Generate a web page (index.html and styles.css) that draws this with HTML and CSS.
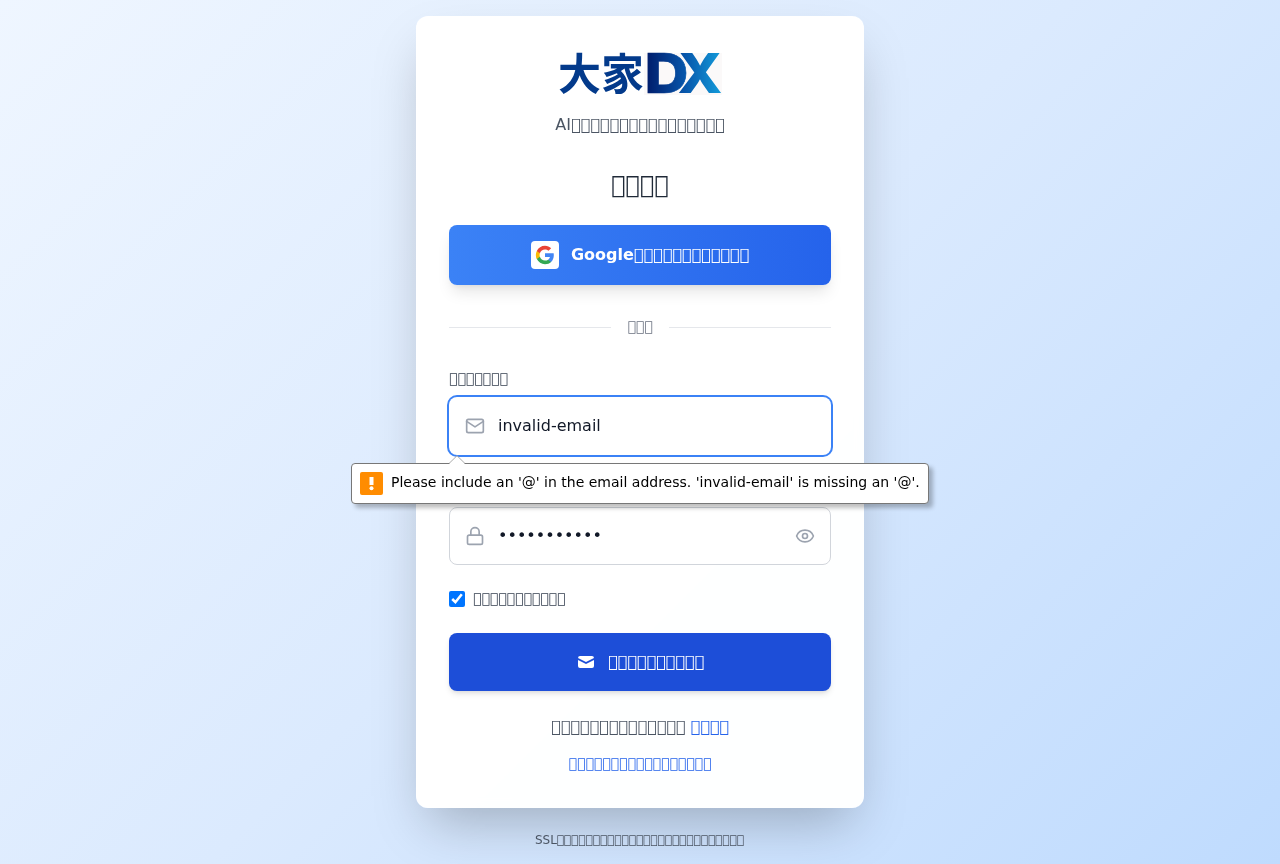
FILE: index.html
```html
<!DOCTYPE html>
<html lang="ja">
<head>
<meta charset="utf-8">
<title>Login</title>
<link rel="stylesheet" href="styles.css">
</head>
<body>
<main class="page">
  <section class="card">
    <svg class="logo" width="168" height="48" viewBox="0 0 168 48">
      <defs>
        <linearGradient id="dx" gradientUnits="userSpaceOnUse" x1="91" y1="10" x2="166" y2="10">
          <stop offset="0" stop-color="#001d6c"/><stop offset=".5" stop-color="#0755aa"/><stop offset="1" stop-color="#149ddb"/>
        </linearGradient>
      </defs>
      <rect x="88" y="4" width="78" height="42" fill="#fbf9f9"/>
      <text class="logo-kanji" x="2" y="41" textLength="86">大家</text>
      <text class="logo-latin" x="88.500" y="44" textLength="44" lengthAdjust="spacingAndGlyphs">D</text>
      <text class="logo-latin logo-x" x="121.500" y="44" textLength="45" lengthAdjust="spacingAndGlyphs">X</text>
    </svg>
    <p class="tagline">AI&#xE900;&#xE900;&#xE900;&#xE900;&#xE900;&#xE900;&#xE900;&#xE900;&#xE900;&#xE900;&#xE900;&#xE900;&#xE900;&#xE900;&#xE900;&#xE900;</p>
    <h1 class="title">&#xE900;&#xE900;&#xE900;&#xE900;</h1>
    <button class="google" type="button">
      <span class="google-mark">
        <svg width="20" height="20" viewBox="0 0 24 24">
          <path fill="#4285F4" d="M22.56 12.25c0-.78-.07-1.53-.2-2.25H12v4.26h5.92c-.26 1.37-1.04 2.53-2.21 3.31v2.77h3.57c2.08-1.92 3.28-4.74 3.28-8.09z"/>
          <path fill="#34A853" d="M12 23c2.97 0 5.46-.98 7.28-2.66l-3.57-2.77c-.98.66-2.23 1.06-3.71 1.06-2.86 0-5.29-1.93-6.16-4.53H2.18v2.84C3.99 20.53 7.7 23 12 23z"/>
          <path fill="#FBBC05" d="M5.84 14.09c-.22-.66-.35-1.36-.35-2.09s.13-1.43.35-2.09V7.07H2.18C1.43 8.55 1 10.22 1 12s.43 3.45 1.18 4.93l3.66-2.84z"/>
          <path fill="#EA4335" d="M12 5.38c1.62 0 3.06.56 4.21 1.64l3.15-3.15C17.45 2.09 14.97 1 12 1 7.7 1 3.99 3.47 2.18 7.07l3.66 2.84c.87-2.6 3.3-4.53 6.16-4.53z"/>
        </svg>
      </span>
      <span>Google&#xE900;&#xE900;&#xE900;&#xE900;&#xE900;&#xE900;&#xE900;&#xE900;&#xE900;&#xE900;&#xE900;&#xE900;</span>
    </button>
    <div class="divider"><span>&#xE900;&#xE900;&#xE900;</span></div>
    <form class="form">
      <label class="label">&#xE900;&#xE900;&#xE900;&#xE900;&#xE900;&#xE900;&#xE900;</label>
      <div class="field field-focus">
        <svg class="icon" width="20" height="20" viewBox="0 0 24 24"><rect x="2" y="4" width="20" height="16" rx="2"/><path d="M22 6.500l-10 6.500L2 6.500"/></svg>
        <span class="value">invalid-email</span>
        <div class="tooltip">
          <svg class="tip-arrow" width="18" height="9" viewBox="0 0 18 9"><path d="M1 9L9 1l8 8z" fill="#fff"/><path d="M1 8.5L9 .7l8 7.8" fill="none" stroke="#aaa"/></svg>
          <span class="warn"><svg width="23" height="23" viewBox="0 0 23 23"><path fill="#fff" d="M9.5 5h4v8h-4z"/><circle cx="11.5" cy="16.2" r="2" fill="#fff"/></svg></span>
          <span class="tip-text">Please include an '@' in the email address. 'invalid-email' is missing an '@'.</span>
        </div>
      </div>
      <div class="label" aria-hidden="true"></div>
      <div class="field">
        <svg class="icon" width="20" height="20" viewBox="0 0 24 24"><rect x="3" y="11" width="18" height="11" rx="2"/><path d="M7 11V7a5 5 0 0 1 10 0v4"/></svg>
        <span class="value">•••••••••••</span>
        <svg class="icon icon-eye" width="20" height="20" viewBox="0 0 24 24"><path d="M2.062 12.348a1 1 0 0 1 0-.696 10.750 10.750 0 0 1 19.876 0 1 1 0 0 1 0 .696 10.750 10.750 0 0 1-19.876 0"/><circle cx="12" cy="12" r="3"/></svg>
      </div>
      <label class="remember"><input class="check" type="checkbox" checked><span>&#xE900;&#xE900;&#xE900;&#xE900;&#xE900;&#xE900;&#xE900;&#xE900;&#xE900;&#xE900;&#xE900;</span></label>
      <button class="submit" type="button">
        <svg width="20" height="20" viewBox="0 0 20 20" fill="#fff"><path d="M2.003 5.884L10 9.882l7.997-3.998A2 2 0 0016 4H4a2 2 0 00-1.997 1.884z"/><path d="M18 8.118l-8 4-8-4V14a2 2 0 002 2h12a2 2 0 002-2V8.118z"/></svg>
        <span>&#xE900;&#xE900;&#xE900;&#xE900;&#xE900;&#xE900;&#xE900;&#xE900;&#xE900;&#xE900;</span>
      </button>
    </form>
    <p class="signup">&#xE900;&#xE900;&#xE900;&#xE900;&#xE900;&#xE900;&#xE900;&#xE900;&#xE900;&#xE900;&#xE900;&#xE900;&#xE900;&#xE900; <a class="link">&#xE900;&#xE900;&#xE900;&#xE900;</a></p>
    <p class="forgot">&#xE900;&#xE900;&#xE900;&#xE900;&#xE900;&#xE900;&#xE900;&#xE900;&#xE900;&#xE900;&#xE900;&#xE900;&#xE900;&#xE900;&#xE900;&#xE900;&#xE900;</p>
  </section>
  <p class="footer">SSL&#xE900;&#xE900;&#xE900;&#xE900;&#xE900;&#xE900;&#xE900;&#xE900;&#xE900;&#xE900;&#xE900;&#xE900;&#xE900;&#xE900;&#xE900;&#xE900;&#xE900;&#xE900;&#xE900;&#xE900;&#xE900;&#xE900;&#xE900;&#xE900;&#xE900;&#xE900;</p>
</main>
</body>
</html>
```
FILE: styles.css
```css
* { box-sizing: border-box; margin: 0; padding: 0; }
body { font-family: "DejaVu Sans", sans-serif; font-size: 16px; line-height: 24px; color: #111827; }
button { font: inherit; border: 0; }
.page {
  height: 864px; padding-top: 16px; overflow: hidden;
  display: flex; flex-direction: column; align-items: center;
  background: linear-gradient(135deg, #eff6ff 0%, #dbeafe 50%, #bfdbfe 100%);
}
.card {
  width: 448px; height: 792px; padding: 33px; flex: none;
  display: flex; flex-direction: column; align-items: center;
  border-radius: 12px; background: rgba(255, 255, 255, .98);
  backdrop-filter: blur(4px);
  box-shadow: 0 25px 50px -12px rgba(0, 0, 0, .25);
}
.logo { display: block; overflow: visible; }
.logo-kanji { font: 700 43px "Noto Sans CJK JP", sans-serif; fill: #033a8b; }
.logo-latin { font: 800 55px Inter, sans-serif; fill: url(#dx); stroke: url(#dx); stroke-width: .6px; }
.logo-x { stroke: none; }
.tagline { margin-top: 16px; color: #4b5563; }
.title { margin-top: 32px; font-size: 24px; line-height: 32px; font-weight: 400; color: #1f2937; }
.google {
  width: 382px; height: 60px; margin-top: 24px; border-radius: 8px; flex: none;
  display: flex; align-items: center; justify-content: center; gap: 12px;
  color: #fff; font-weight: 700; background: linear-gradient(90deg, #3b82f6, #2563eb);
  box-shadow: 0 10px 15px -3px rgba(0, 0, 0, .1), 0 4px 6px -4px rgba(0, 0, 0, .1);
}
.google-mark { width: 28px; height: 28px; padding: 4px; border-radius: 4px; background: #fff; }
.google-mark svg { display: block; }
.divider {
  width: 382px; margin-top: 32px; display: flex; align-items: center; gap: 16px;
  font-size: 14px; line-height: 20px; color: #6b7280;
}
.divider span { line-height: 18px; padding-bottom: 2px; }
.divider::before, .divider::after { content: ""; flex: 1; height: 1px; background: #e5e7eb; }
.form { width: 382px; margin-top: 32px; }
.label { display: block; height: 18px; margin-bottom: 10px; font-size: 14px; line-height: 18px; color: #374151; }
.field {
  position: relative; height: 58px; margin-bottom: 24px; padding: 0 15px;
  display: flex; align-items: center; gap: 13px;
  border: 1px solid #d1d5db; border-radius: 8px; background: #fff;
}
.field-focus { border-color: transparent; box-shadow: 0 0 0 2px #3b82f6; }
.icon { flex: none; fill: none; stroke: #9ca3af; stroke-width: 2; stroke-linecap: round; stroke-linejoin: round; }
.icon-eye { margin-left: auto; }
.tooltip {
  position: absolute; z-index: 2; left: -99px; top: 65px; width: 578px; height: 41px;
  display: flex; align-items: center; gap: 8px; padding: 0 8px;
  border: 1px solid #777; border-radius: 4px; background: #fff;
  color: #000; font-size: 14px; line-height: 20px; white-space: nowrap;
  box-shadow: 4px 4px 4px rgba(0, 0, 0, .25);
}
.tip-text { padding-bottom: 3px; }
.tip-arrow { position: absolute; left: 96px; top: -9px; }
.warn { flex: none; width: 23px; height: 23px; border-radius: 2px; background: #ff8c00; }
.warn svg { display: block; }
.remember { display: flex; align-items: center; gap: 8px; font-size: 14px; line-height: 20px; color: #374151; }
.remember span { line-height: 18px; padding-bottom: 2px; }
.check { width: 16px; height: 16px; }
.submit {
  width: 382px; height: 58px; margin-top: 24px; border-radius: 8px;
  display: flex; align-items: center; justify-content: center; gap: 12px;
  background: #1d4ed8; color: #fff; box-shadow: 0 4px 6px -1px rgba(0, 0, 0, .1), 0 2px 4px -2px rgba(0, 0, 0, .1);
}
.signup { margin-top: 24px; color: #4b5563; }
.link { color: #2563eb; }
.forgot { margin-top: 14px; font-size: 14px; line-height: 20px; color: #2563eb; }
.footer { margin-top: 24px; font-size: 12px; line-height: 16px; color: #4b5563; will-change: transform; }
```
